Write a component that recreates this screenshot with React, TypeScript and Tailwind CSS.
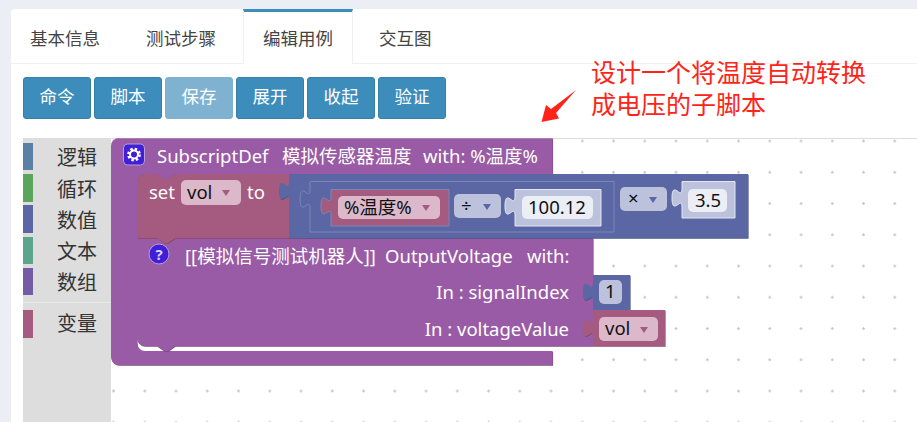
const tabs = ['基本信息', '测试步骤', '编辑用例', '交互图'];
const buttons = ['命令', '脚本', '保存', '展开', '收起', '验证'];
const categories = [
  { name: '逻辑', stripe: 'bg-[#5b80a5]', row: 'h-[27px] mb-[4px]' },
  { name: '循环', stripe: 'bg-[#5ba55b]', row: 'h-[28px] mb-[3px]' },
  { name: '数值', stripe: 'bg-[#5b67a5]', row: 'h-[28px] mb-[4px]' },
  { name: '文本', stripe: 'bg-[#5ba58c]', row: 'h-[27px] mb-[4px]' },
  { name: '数组', stripe: 'bg-[#745ba5]', row: 'h-[27px] mb-[7px]' },
];

const PURPLE = '#995ba5';
const RED = '#a55b80';
const BLUE = '#5b67a5';
const PILL_RED = '#dbb9cb';
const PILL_BLUE = '#bcc2dc';

// puzzle tab on a block's left edge, drawn going upward (18px tall)
const tab = (x: number, bottom: number) => `L${x},${bottom} c0,-12 -10,10 -10,-9 s10,3 10,-9`;

function Block({ d, fill, edge, shade }: { d: string; fill: string; edge?: string; shade?: string }) {
  return (
    <g>
      {shade && <path d={d} fill={shade} transform="translate(0.6,0.8)" />}
      <path d={d} fill={fill} stroke={edge} strokeWidth={edge ? 1 : 0} />
    </g>
  );
}

function Pill({ x, y, w, h, fill }: { x: number; y: number; w: number; h: number; fill: string }) {
  return <rect x={x} y={y} width={w} height={h} rx={5} fill={fill} />;
}

function Arrow({ x, y, fill }: { x: number; y: number; fill: string }) {
  return <path d={`M${x - 4},${y - 2} h8 l-4,6 Z`} fill={fill} />;
}

function Label({ x, y, end, dark, children }: { x: number; y: number; end?: boolean; dark?: boolean; children: string }) {
  return (
    <text x={x} y={y} fontSize={18.5} fill={dark ? '#111' : '#fff'} textAnchor={end ? 'end' : 'start'}>
      {children}
    </text>
  );
}

function Workspace() {
  return (
    <svg
      viewBox="111 138 806 284"
      className="block w-full h-full [font-family:'Noto_Sans','Noto_Sans_CJK_SC',sans-serif]"
    >
      <defs>
        <pattern id="grid" x="18.3" y="14.5" width="31.25" height="31.25" patternUnits="userSpaceOnUse">
          <path d="M0,1.5 h3 M1.5,0 v3" stroke="#c8c8c8" strokeWidth="1.2" />
        </pattern>
      </defs>
      <rect x="111" y="138" width="806" height="284" fill="url(#grid)" />
      <path d="M111,138.5 H917" stroke="#ddd" strokeWidth="1" />

      {/* SubscriptDef */}
      <Block
        fill={PURPLE}
        shade="#7a4984"
        d="M111,146 a8,8 0 0 1 8,-8 H552.5 V174 H175 l-7,5 h-4 l-7,-5 H145 a8,8 0 0 0 -8,8 V343 a8,8 0 0 0 8,8 H552.5 V365 H119 a8,8 0 0 1 -8,-8 Z"
      />
      <path d="M119,138.5 H552" stroke="#ad7cb7" strokeWidth="1" />
      <rect x="123.5" y="144" width="21" height="21" rx="4" fill="#3f1fd8" stroke="#b79cd6" />
      <circle cx="134" cy="154.5" r="5.6" fill="none" stroke="#fff" strokeWidth="2.6" strokeDasharray="2.4 2" />
      <circle cx="134" cy="154.5" r="4" fill="none" stroke="#fff" strokeWidth="2" />
      <Label x={157} y={163}>SubscriptDef</Label>
      <Label x={282} y={163}>模拟传感器温度</Label>
      <Label x={423} y={163}>with: %温度%</Label>

      {/* OutputVoltage call */}
      <Block
        fill={PURPLE}
        shade="#7a4984"
        d="M137,238 H593 V346 H175 l-7,5 h-4 l-7,-5 H145 a8,8 0 0 1 -8,-8 Z"
      />
      <circle cx="159" cy="254" r="10" fill="#3f1fd8" stroke="#b79cd6" />
      <text x="159" y="260" fontSize="15" fontWeight="700" fill="#d9d3f5" textAnchor="middle">?</text>
      <Label x={185} y={263}>[[模拟信号测试机器人]]</Label>
      <Label x={385} y={263}>OutputVoltage</Label>
      <Label x={527} y={263}>with:</Label>
      <Label x={569} y={299} end>In : signalIndex</Label>
      <Label x={569} y={336} end>In : voltageValue</Label>

      {/* set vol to */}
      <Block
        fill={RED}
        shade="#84496a"
        d="M137,182 a8,8 0 0 1 8,-8 H157 l7,5 h4 l7,-5 H289 V238 H175 l-7,5 h-4 l-7,-5 H137 Z"
      />
      <Label x={149} y={199}>set</Label>
      <Pill x={181} y={180} w={60} h={25} fill={PILL_RED} />
      <Label x={187} y={199} dark>vol</Label>
      <Arrow x={226} y={192} fill={RED} />
      <Label x={247} y={199}>to</Label>

      {/* vol / 100.12 * 3.5 */}
      <Block fill={BLUE} shade="#495385" d={`M289,174 H748 V238 H289 V200 ${tab(289, 200)} V174 Z`} />
      <Block fill={BLUE} edge="#7c85b7" d={`M310,181.5 H614 V232 H310 V208 ${tab(310, 208)} V181.5 Z`} />
      <Block fill={RED} edge="#7c85b7" d={`M331,189.5 H449 V226 H331 V215 ${tab(331, 215)} V189.5 Z`} />
      <Pill x={338} y={196} w={102} h={23} fill={PILL_RED} />
      <Label x={344} y={214} dark>%温度%</Label>
      <Arrow x={426} y={207} fill={RED} />

      <Pill x={454} y={194} w={47} h={24} fill={PILL_BLUE} />
      <Label x={461} y={212} dark>÷</Label>
      <Arrow x={487} y={206} fill={BLUE} />
      <Block fill={PILL_BLUE} edge="#e4e6f2" d={`M515,189.5 H601 V226 H515 V215 ${tab(515, 215)} V189.5 Z`} />
      <Pill x={522} y={196} w={71} h={23} fill="#eceef6" />
      <Label x={528} y={214} dark>100.12</Label>

      <Pill x={620} y={187} w={47} h={24} fill={PILL_BLUE} />
      <Label x={628} y={205} dark>×</Label>
      <Arrow x={653} y={199} fill={BLUE} />
      <Block fill={PILL_BLUE} edge="#e4e6f2" d={`M682,181.5 H735 V218 H682 V207 ${tab(682, 207)} V181.5 Z`} />
      <Pill x={688} y={189} w={39} h={23} fill="#eceef6" />
      <Label x={695} y={207} dark>3.5</Label>

      {/* signalIndex value */}
      <Block fill={BLUE} shade="#495385" d={`M593,275 H630 V310 H593 V301 ${tab(593, 301)} V275 Z`} />
      <Pill x={599} y={280} w={23} h={24} fill={PILL_BLUE} />
      <Label x={605} y={298} dark>1</Label>

      {/* voltageValue value */}
      <Block fill={RED} shade="#84496a" d={`M593,310 H665 V346 H593 V337 ${tab(593, 337)} V310 Z`} />
      <Pill x={599} y={317} w={59} h={24} fill={PILL_RED} />
      <Label x={605} y={335} dark>vol</Label>
      <Arrow x={644} y={329} fill={RED} />
    </svg>
  );
}

export default function App() {
  return (
    <div className="h-screen overflow-hidden bg-[#ebeef4] pt-[9px] pl-[11px] [font-family:'Noto_Sans','Noto_Sans_CJK_SC',sans-serif]">
      <div className="relative flex h-full flex-col rounded-tl-[4px] bg-white">
        {/* Tabs */}
        <div className="-ml-[1px] flex h-[55px] shrink-0 gap-[6px] border-b border-[#f0f0f0] pl-[1px] text-[17.5px] text-[#444]">
          {tabs.map((t) => (
            <div
              key={t}
              className={
                t === '编辑用例'
                  ? 'ml-[1px] h-[55px] border-x border-t-[3px] border-x-[#f0f0f0] border-t-[#3c8dbc] bg-white px-[19px] pt-[13px]'
                  : 'first:-ml-[1px] px-[20px] pt-[16px]'
              }
            >
              {t}
            </div>
          ))}
        </div>

        {/* Toolbar */}
        <div className="flex shrink-0 gap-[3px] pl-[12px] pt-[13px]">
          {buttons.map((b) => (
            <button
              key={b}
              className={
                b === '保存'
                  ? 'h-[42px] w-[68px] rounded-[3px] border border-[#7fb2d1] bg-[#7fb2d1] pb-[3px] text-[17.5px] text-white'
                  : 'h-[42px] w-[68px] rounded-[3px] border border-[#367fa9] bg-[#3c8dbc] pb-[3px] text-[17.5px] text-white'
              }
            >
              {b}
            </button>
          ))}
        </div>

        {/* Blockly area */}
        <div className="mt-[19px] ml-[12px] flex min-h-0 flex-1">
          <div className="w-[88px] shrink-0 bg-[#ddd] pt-[5px] text-[20px] text-[#333]">
            {categories.map((c) => (
              <div key={c.name} className={`flex items-center ${c.row}`}>
                <span className={`h-full w-[10px] ${c.stripe}`} />
                <span className="ml-[24px] pt-[3px]">{c.name}</span>
              </div>
            ))}
            <div className="mb-[7px] border-t border-[#e8e8e8]" />
            <div className="flex h-[28px] items-center">
              <span className="h-full w-[10px] bg-[#a55b80]" />
              <span className="ml-[24px]">变量</span>
            </div>
          </div>
          <div className="min-w-0 flex-1">
            <Workspace />
          </div>
        </div>

        {/* Annotation */}
        <div className="absolute left-[580px] top-[47px] text-[25px] leading-[32px] text-[#ff2419]">
          设计一个将温度自动转换
          <br />
          成电压的子脚本
        </div>
        <svg className="absolute left-[530px] top-[80px]" width="36" height="34" viewBox="541 89 36 34">
          <path d="M576,90 L556,113 L559,118.5 L541.5,122 L546,105 L551,109 Z" fill="#ff2419" />
        </svg>
      </div>
    </div>
  );
}
